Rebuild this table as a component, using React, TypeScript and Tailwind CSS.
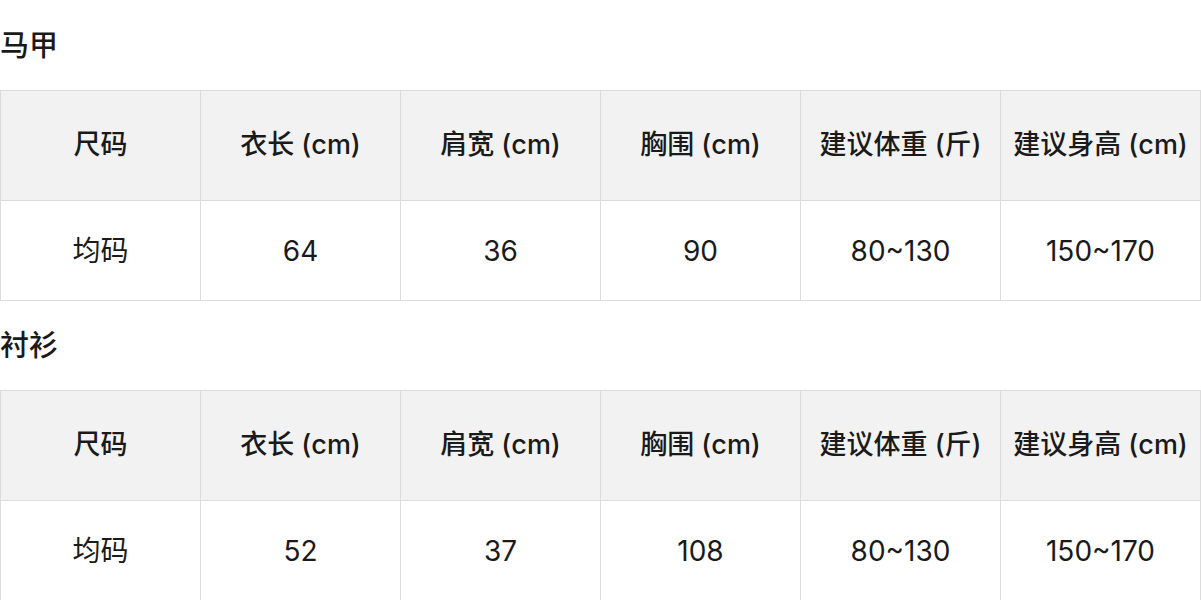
const headers = ['尺码', '衣长 (cm)', '肩宽 (cm)', '胸围 (cm)', '建议体重 (斤)', '建议身高 (cm)'];

const sections = [
  { title: '马甲', row: ['均码', '64', '36', '90', '80~130', '150~170'] },
  { title: '衬衫', row: ['均码', '52', '37', '108', '80~130', '150~170'] },
];

export default function App() {
  return (
    <div
      className="w-[1201px] bg-white text-[#1a1a1a]"
      style={{ fontFamily: 'Inter, "Noto Sans CJK SC", sans-serif' }}
    >
      {sections.map((s, idx) => (
        <div key={s.title}>
          <div
            className={`${idx === 0 ? 'h-[90px]' : 'h-[89px]'} flex items-center text-[29px] font-medium leading-none`}
          >
            {s.title}
          </div>
          <table className="border-collapse table-fixed w-[1201px]">
            <thead>
              <tr className="bg-[#f2f2f2]">
                {headers.map((h) => (
                  <th
                    key={h}
                    className="w-[200px] h-[110px] p-0 border border-[#dcdcdc] text-[27px] font-medium text-center whitespace-nowrap"
                  >
                    {h}
                  </th>
                ))}
              </tr>
            </thead>
            <tbody>
              <tr>
                {s.row.map((c, i) => (
                  <td
                    key={i}
                    className="w-[200px] h-[100px] p-0 border border-[#dcdcdc] text-[28px] text-center"
                  >
                    {c}
                  </td>
                ))}
              </tr>
            </tbody>
          </table>
        </div>
      ))}
    </div>
  );
}
